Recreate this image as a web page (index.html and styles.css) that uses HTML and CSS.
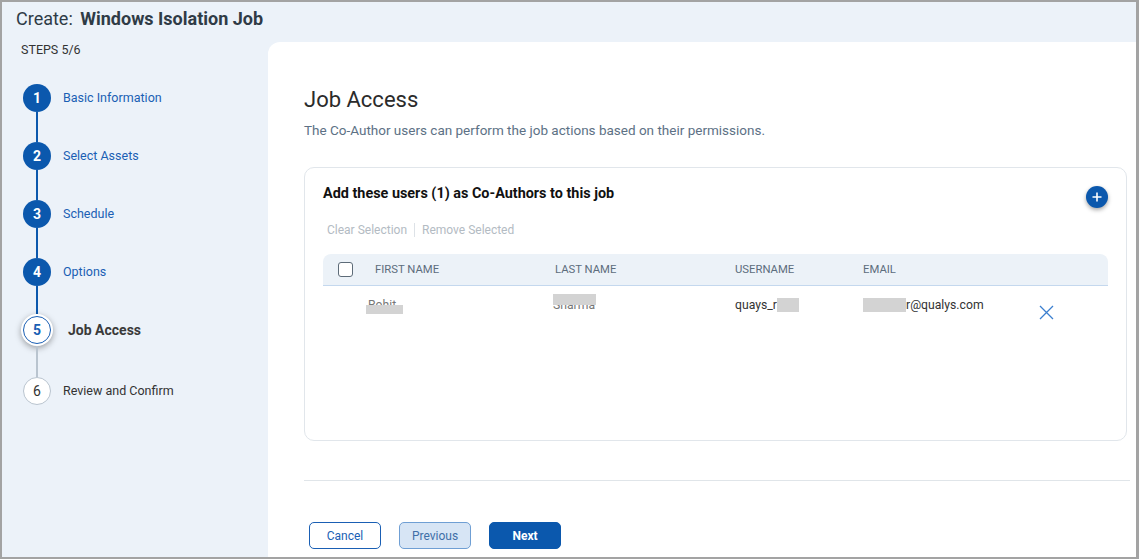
FILE: index.html
```html
<!DOCTYPE html>
<html lang="en">
<head>
    <meta charset="UTF-8">
    <title>Create: Windows Isolation Job</title>
    <link rel="stylesheet" href="styles.css">
</head>
<body>
<div class="frame">
    <div class="topbar">
        <span class="title-prefix">Create:</span> <span class="title-name">Windows Isolation Job</span>
    </div>

    <div class="layout">
        <!-- wizard steps -->
        <div class="sidebar">
            <div class="steps-count">STEPS 5/6</div>
            <div class="steps">
                <div class="step done">
                    <div class="marker"><span class="circle">1</span><span class="line"></span></div>
                    <span class="label">Basic Information</span>
                </div>
                <div class="step done">
                    <div class="marker"><span class="circle">2</span><span class="line"></span></div>
                    <span class="label">Select Assets</span>
                </div>
                <div class="step done">
                    <div class="marker"><span class="circle">3</span><span class="line"></span></div>
                    <span class="label">Schedule</span>
                </div>
                <div class="step done before-active">
                    <div class="marker"><span class="circle">4</span><span class="line"></span></div>
                    <span class="label">Options</span>
                </div>
                <div class="step active">
                    <div class="marker"><span class="circle"><span class="ring">5</span></span><span class="line"></span></div>
                    <span class="label">Job Access</span>
                </div>
                <div class="step todo last">
                    <div class="marker"><span class="circle">6</span></div>
                    <span class="label">Review and Confirm</span>
                </div>
            </div>
        </div>

        <div class="main">
            <h2 class="page-title">Job Access</h2>
            <p class="page-desc">The Co-Author users can perform the job actions based on their permissions.</p>

            <div class="card">
                <div class="card-head">
                    <span class="card-title">Add these users (1) as Co-Authors to this job</span>
                    <button class="add-btn" title="Add">
                        <svg width="10" height="10" viewBox="0 0 10 10"><path d="M5 0.5V9.5M0.5 5H9.5" stroke="#fff" stroke-width="1.6"/></svg>
                    </button>
                </div>
                <div class="toolbar">
                    <span>Clear Selection</span>
                    <span class="sep"></span>
                    <span>Remove Selected</span>
                </div>

                <div class="table">
                    <div class="row head">
                        <span class="cell check"><span class="checkbox"></span></span>
                        <span class="cell">FIRST NAME</span>
                        <span class="cell">LAST NAME</span>
                        <span class="cell">USERNAME</span>
                        <span class="cell">EMAIL</span>
                        <span class="cell"></span>
                    </div>
                    <div class="row body">
                        <span class="cell check"></span>
                        <span class="cell"><span class="masked first">Rohit<span class="blur b-first"></span></span></span>
                        <span class="cell"><span class="masked last">Sharma<span class="blur b-last"></span></span></span>
                        <span class="cell">quays_r<span class="blank b-user"></span></span>
                        <span class="cell"><span class="blank b-mail"></span>r@qualys.com</span>
                        <span class="cell action">
                            <svg width="15" height="15" viewBox="0 0 15 15"><path d="M1 1L14 14M14 1L1 14" stroke="#3b7fcf" stroke-width="1.3"/></svg>
                        </span>
                    </div>
                </div>
            </div>

            <hr class="divider">

            <div class="actions">
                <button class="btn btn-cancel">Cancel</button>
                <button class="btn btn-prev">Previous</button>
                <button class="btn btn-next">Next</button>
            </div>
        </div>
    </div>
</div>
</body>
</html>
```

FILE: styles.css
```css
* {
    box-sizing: border-box;
}
body {
    margin: 0;
    font-family: Roboto, "Liberation Sans", sans-serif;
    color: #333;
}
.frame {
    width: 1139px;
    height: 559px;
    border: 2px solid #a3a3a3;
    border-right-width: 3px;
    background: #ecf2f9;
    overflow: hidden;
    display: flex;
    flex-direction: column;
}
.topbar {
    height: 40px;
    padding: 5px 0 0 14px;
    font-size: 18px;
    line-height: 24px;
    color: #2f3b46;
}
.title-name {
    font-weight: 700;
    margin-left: 3px;
}
.layout {
    flex: 1;
    display: flex;
}
.sidebar {
    width: 266px;
    padding-left: 19px;
}
.steps-count {
    font-size: 12.5px;
    line-height: 16px;
    color: #333;
}
.steps {
    margin-top: 26px;
}
.step {
    display: flex;
    height: 58px;
}
.step.before-active {
    height: 56px;
}
.step.active {
    height: 63px;
}
.step.last {
    height: 28px;
}
.marker {
    width: 32px;
    display: flex;
    flex-direction: column;
    align-items: center;
}
.circle {
    width: 28px;
    height: 28px;
    border-radius: 50%;
    flex: none;
    display: flex;
    align-items: center;
    justify-content: center;
    font-size: 14px;
    font-weight: 700;
}
.line {
    width: 2px;
    flex: 1;
    background: #0b58ad;
}
.label {
    margin-left: 10px;
    line-height: 28px;
    font-size: 12.5px;
}
.step.done .circle {
    background: #0b58ad;
    color: #fff;
}
.step.done .label {
    color: #1a5fb4;
}
.step.active .circle {
    width: 32px;
    height: 32px;
    background: #fff;
    box-shadow: 0 2px 6px rgba(0, 0, 0, 0.35);
    padding: 2px;
}
.ring {
    width: 28px;
    height: 28px;
    border: 1px solid #1a5fb4;
    border-radius: 50%;
    display: flex;
    align-items: center;
    justify-content: center;
    color: #1a5fb4;
}
.step.active .line {
    background: #b9c4cf;
}
.step.active .label {
    margin-left: 15px;
    line-height: 32px;
    font-size: 14px;
    font-weight: 700;
    color: #3a3a3a;
}
.step.todo .circle {
    background: #fff;
    border: 1px solid #b9c4cf;
    font-weight: 400;
    color: #333;
}
.step.todo .label {
    color: #333;
}

.main {
    flex: 1;
    background: #fff;
    border-top-left-radius: 12px;
    padding: 44px 6px 0 36px;
}
.page-title {
    margin: 0;
    font-size: 22px;
    line-height: 28px;
    font-weight: 400;
    color: #2b2b2b;
}
.page-desc {
    margin: 6px 0 0;
    font-size: 13.5px;
    line-height: 20px;
    color: #5d7185;
}
.card {
    margin: 27px 3px 0 0;
    height: 274px;
    border: 1px solid #e1e6eb;
    border-radius: 10px;
    padding: 16px 18px 0 18px;
}
.card-head {
    display: flex;
    justify-content: space-between;
    align-items: flex-start;
}
.card-title {
    font-size: 14.4px;
    line-height: 20px;
    font-weight: 700;
    color: #111;
}
.add-btn {
    width: 22px;
    height: 22px;
    margin-top: 2px;
    border: none;
    border-radius: 50%;
    background: #0b58ad;
    box-shadow: 0 2px 4px rgba(0, 0, 0, 0.35);
    display: flex;
    align-items: center;
    justify-content: center;
    padding: 0;
}
.toolbar {
    margin-top: 14px;
    padding-left: 4px;
    display: flex;
    align-items: center;
    gap: 7px;
    font-size: 12px;
    line-height: 16px;
    color: #b3bbc3;
}
.sep {
    width: 1px;
    height: 14px;
    background: #dde2e7;
}
.table {
    margin-top: 16px;
}
.row {
    display: grid;
    grid-template-columns: 52px 180px 180px 128px 170px 1fr;
    align-items: center;
}
.row.head {
    height: 32px;
    background: #ecf2f8;
    border-bottom: 1px solid #c4d8ee;
    border-radius: 8px 8px 0 0;
    font-size: 11.3px;
    color: #5d6d7d;
}
.cell.check {
    padding-left: 15px;
}
.checkbox {
    display: block;
    width: 15px;
    height: 15px;
    border: 1.5px solid #5d6b78;
    border-radius: 3px;
    background: #fff;
}
.row.body {
    height: 40px;
    font-size: 12.2px;
    color: #333;
    align-items: start;
    padding-top: 12px;
}
.masked {
    position: relative;
    display: inline-block;
    color: #777;
}
.masked.first {
    margin-left: -7px;
}
.masked.last {
    margin-left: -2px;
}
.blur {
    position: absolute;
    background: #d3d3d3;
}
.b-first {
    left: -2px;
    top: 7px;
    width: 37px;
    height: 9px;
}
.b-last {
    left: 0;
    top: -4px;
    width: 43px;
    height: 11px;
}
.blank {
    display: inline-block;
    vertical-align: -3px;
    background: #d3d3d3;
    height: 14px;
}
.b-user {
    width: 22px;
}
.b-mail {
    width: 43px;
}
.cell.action {
    padding-top: 7px;
    padding-left: 6px;
}
.divider {
    margin: 39px 0 0;
    border: none;
    border-top: 1px solid #e0e5e9;
}
.actions {
    margin-top: 41px;
    padding-left: 5px;
    display: flex;
    gap: 18px;
}
.btn {
    width: 72px;
    height: 27px;
    border-radius: 5px;
    font-family: Roboto, "Liberation Sans", sans-serif;
    font-size: 12px;
    cursor: pointer;
}
.btn-cancel {
    background: #fff;
    border: 1px solid #1a5fb4;
    color: #1a5fb4;
}
.btn-prev {
    background: #d7e5f5;
    border: 1px solid #6f9fd4;
    color: #3f6fa8;
}
.btn-next {
    background: #0b58ad;
    border: 1px solid #0b58ad;
    color: #fff;
    font-weight: 700;
}
```
